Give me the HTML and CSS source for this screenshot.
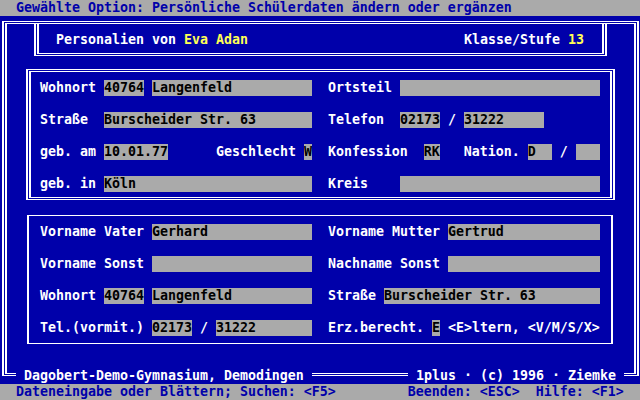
FILE: index.html
```html
<!DOCTYPE html>
<html>
<head>
<meta charset="utf-8">
<title>Personalien</title>
<link rel="stylesheet" href="styles.css">
</head>
<body>
<div class="screen">
  <div class="bar">Gewählte Option: Persönliche Schülerdaten ändern oder ergänzen</div>
  <div class="frame">
    <div class="frame-in">
      <div class="header">
        <div class="header-in">
          <span>Personalien von <span class="hl">Eva Adan</span></span>
          <span>Klasse/Stufe <span class="hl">13</span></span>
        </div>
      </div>
      <div class="box">
        <div class="box-in">
          <div class="line">Wohnort <span class="f w5">40764</span> <span class="f w20">Langenfeld</span>  Ortsteil <span class="f w25"></span></div>
          <div class="line">Straße  <span class="f w26">Burscheider Str. 63</span>  Telefon  <span class="f w5">02173</span> / <span class="f w10">31222</span></div>
          <div class="line">geb. am <span class="f w8">10.01.77</span>      Geschlecht <span class="f w1">W</span>  Konfession  <span class="f w2">RK</span>   Nation. <span class="f w3">D</span> / <span class="f w3"></span></div>
          <div class="line">geb. in <span class="f w26">Köln</span>  Kreis    <span class="f w25"></span></div>
        </div>
      </div>
      <div class="box-single">
        <div class="line">Vorname Vater <span class="f w20">Gerhard</span>  Vorname Mutter <span class="f w19">Gertrud</span></div>
        <div class="line">Vorname Sonst <span class="f w20"></span>  Nachname Sonst <span class="f w19"></span></div>
        <div class="line">Wohnort <span class="f w5">40764</span> <span class="f w20">Langenfeld</span>  Straße <span class="f w27">Burscheider Str. 63</span></div>
        <div class="line">Tel.(vormit.) <span class="f w5">02173</span> / <span class="f w12">31222</span>  Erz.berecht. <span class="f w1">E</span> &lt;E&gt;ltern, &lt;V/M/S/X&gt;</div>
      </div>
      <div class="footer">
        <span> Dagobert-Demo-Gymnasium, Demodingen </span>
        <span> 1plus · (c) 1996 · Ziemke </span>
      </div>
    </div>
  </div>
  <div class="bar">Dateneingabe oder Blättern; Suchen: &lt;F5&gt;         Beenden: &lt;ESC&gt;  Hilfe: &lt;F1&gt;</div>
</div>
</body>
</html>
```
FILE: styles.css
```css
html, body {
  margin: 0;
  padding: 0;
  background: #0000aa;
}

body {
  width: 640px;
  height: 400px;
  overflow: hidden;
}

.screen {
  width: 640px;
  height: 400px;
  display: flex;
  flex-direction: column;
  background: #0000aa;
  color: #ffffff;
  font-family: "DejaVu Sans Mono", "Liberation Mono", monospace;
  font-weight: bold;
  font-size: 13.29px;
  line-height: 16px;
}

.bar {
  flex: none;
  height: 16px;
  background: #aaaaaa;
  color: #0000aa;
  padding-left: 16px;
  white-space: pre;
}

.frame {
  flex: 1;
  display: flex;
  margin: 5px 1px 8px 2px;
  border: solid #ffffff;
  border-width: 1px 2px;
  padding: 1px;
}

.frame-in {
  flex: 1;
  display: flex;
  flex-direction: column;
  border: solid #ffffff;
  border-width: 1px 2px;
}

.header {
  margin: 0 27px;
  border: solid #ffffff;
  border-width: 0 2px 1px;
  padding: 0 1px 1px;
}

.header-in {
  display: flex;
  justify-content: space-between;
  border: solid #ffffff;
  border-width: 0 2px 1px;
  padding: 8px 18px 5px 17px;
  white-space: pre;
}

.hl {
  color: #ffff55;
}

.box {
  margin: 13px 19px 0;
  border: solid #ffffff;
  border-width: 1px 2px;
  padding: 1px;
}

.box-in {
  display: flex;
  flex-direction: column;
  gap: 16px;
  border: solid #ffffff;
  border-width: 1px 2px;
  padding: 8px 0 5px 9px;
}

.box-single {
  display: flex;
  flex-direction: column;
  gap: 16px;
  margin: 15px 21px 0 20px;
  border: solid #ffffff;
  border-width: 1px 2px;
  padding: 8px 0 7px 11px;
}

.line {
  height: 16px;
  white-space: pre;
}

.f {
  display: inline-block;
  vertical-align: top;
  height: 16px;
  background: #aaaaaa;
  color: #000000;
  overflow: hidden;
}

.w1 { width: 8px; }
.w2 { width: 16px; }
.w3 { width: 24px; }
.w5 { width: 40px; }
.w8 { width: 64px; }
.w10 { width: 80px; }
.w12 { width: 96px; }
.w19 { width: 152px; }
.w20 { width: 160px; }
.w25 { width: 200px; }
.w26 { width: 208px; }
.w27 { width: 216px; }

.footer {
  display: flex;
  justify-content: space-between;
  height: 16px;
  margin: auto 10px -11px 9px;
}

.footer span {
  background: #0000aa;
  white-space: pre;
}
```
